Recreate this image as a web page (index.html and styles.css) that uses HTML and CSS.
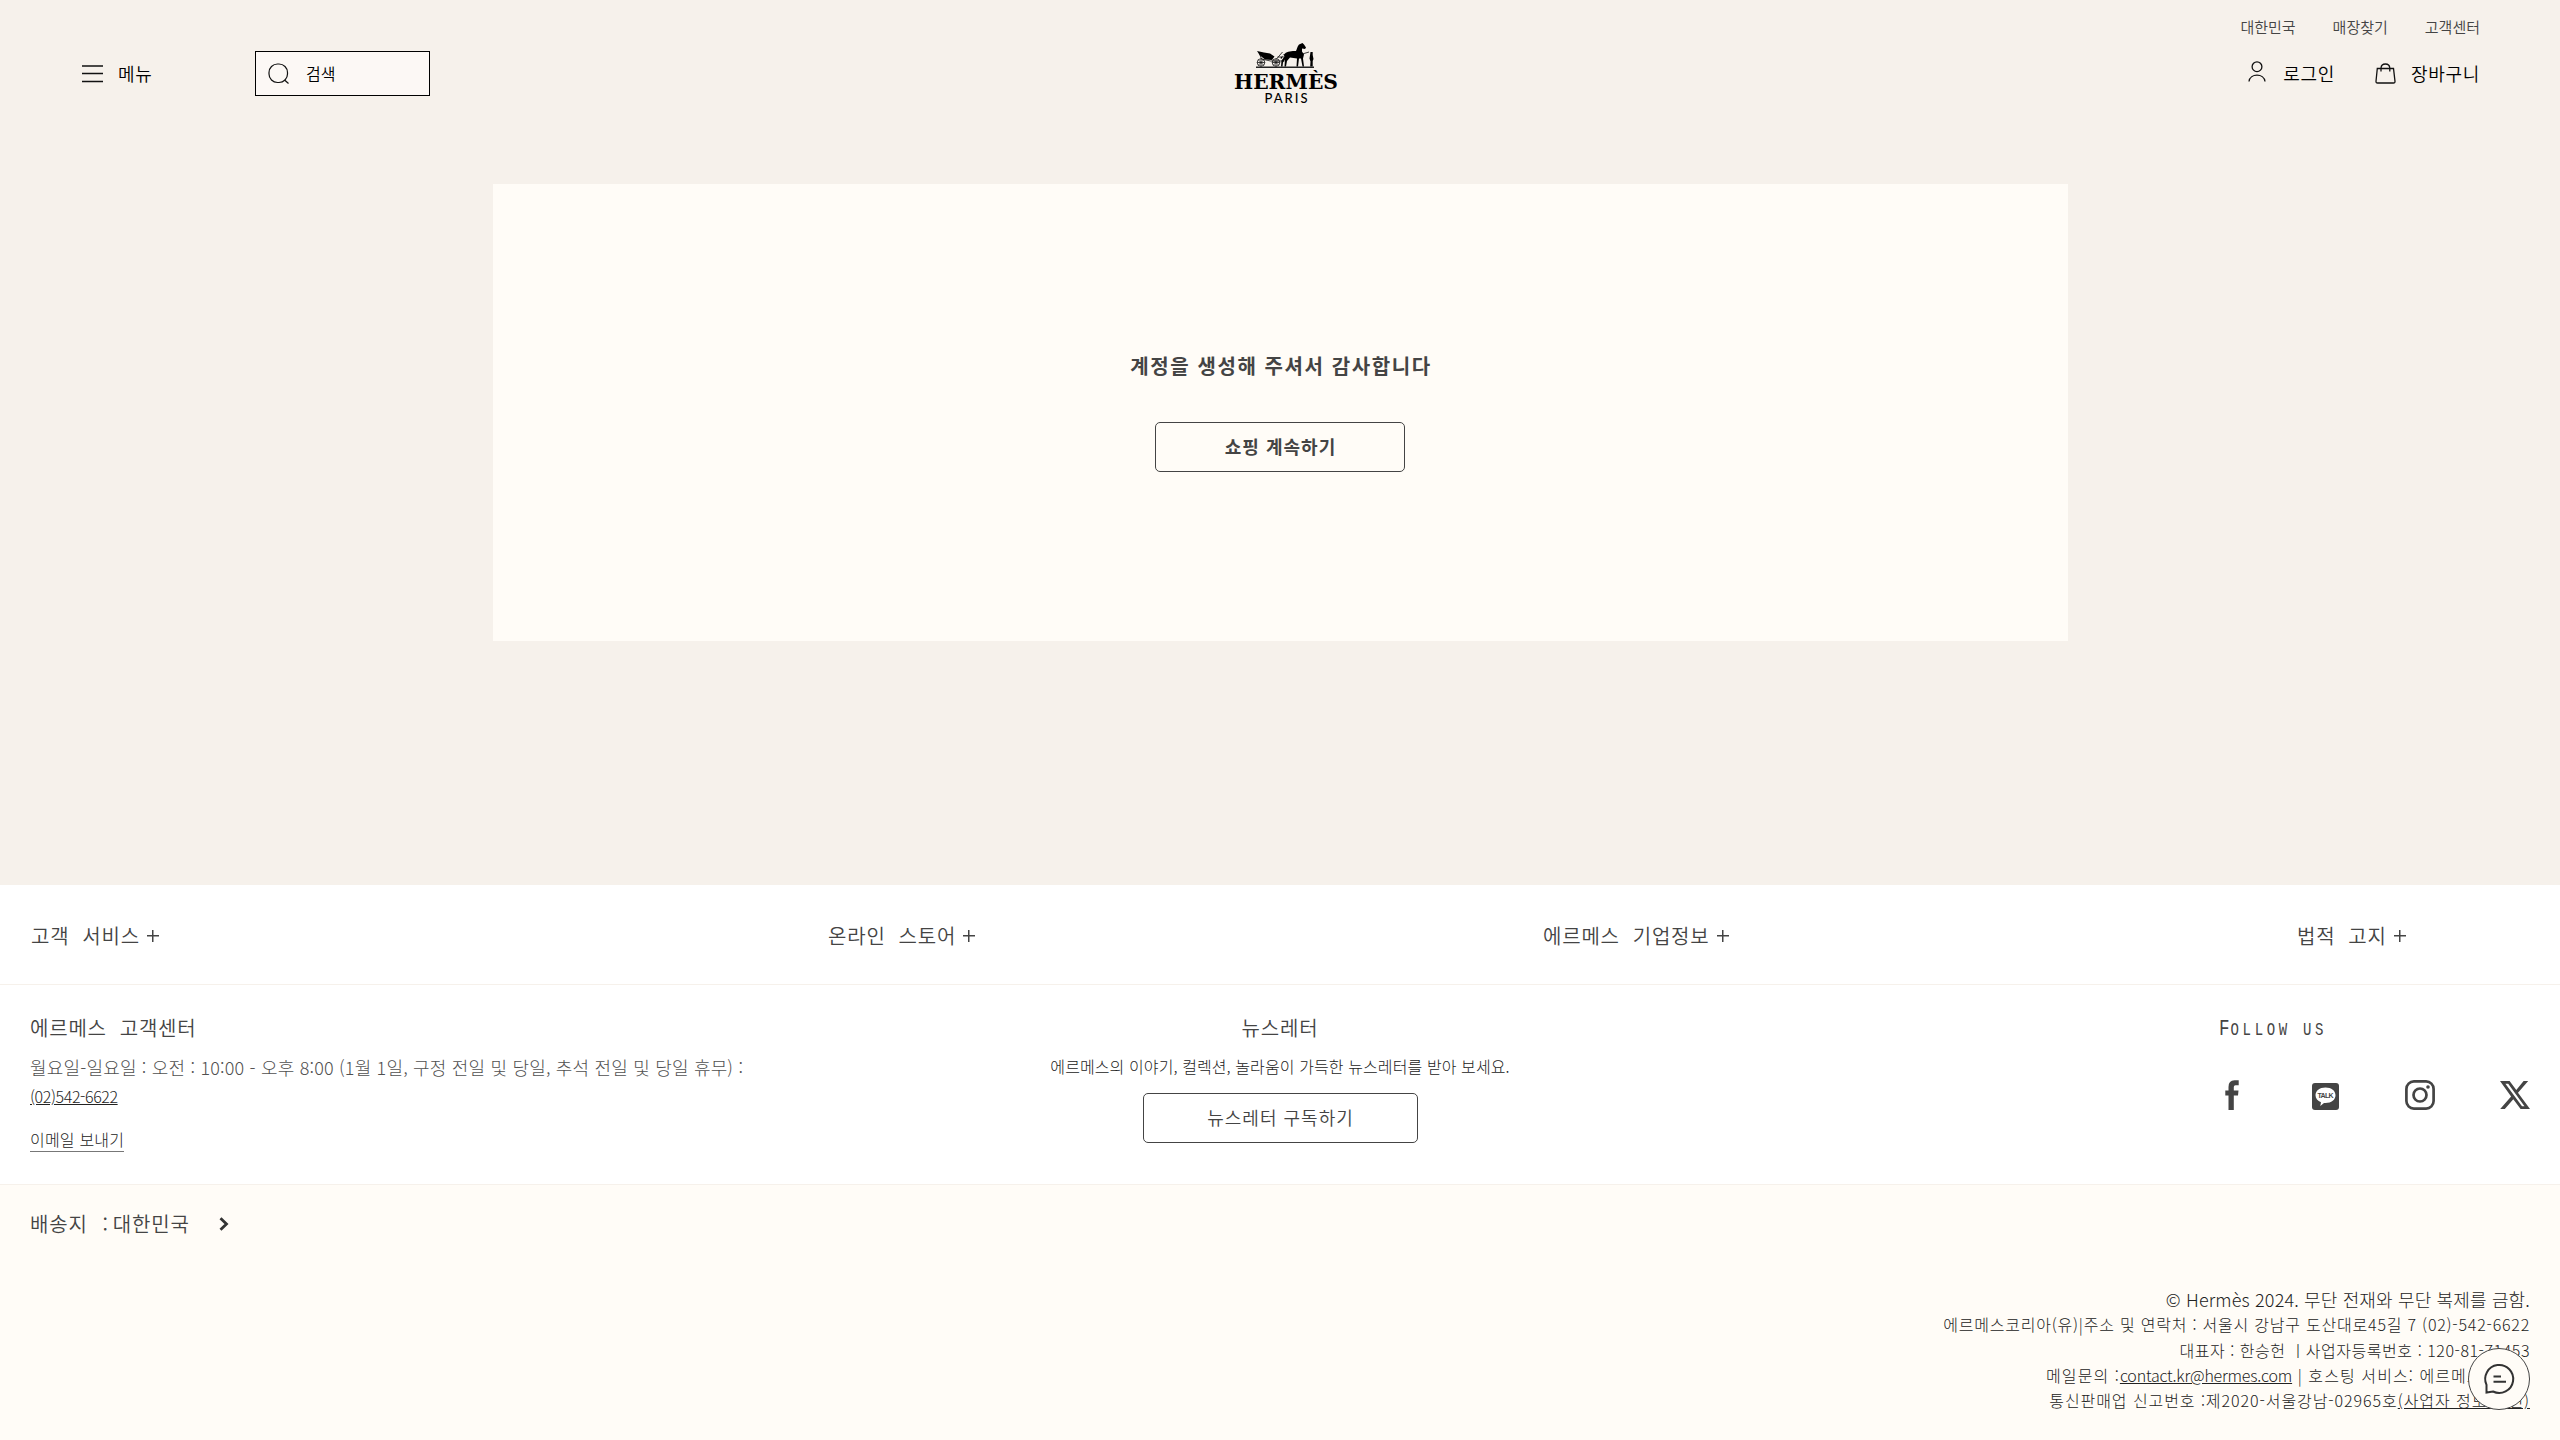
FILE: index.html
```html
<!DOCTYPE html>
<html lang="ko">
<head>
<meta charset="utf-8">
<title>Hermès</title>
<link rel="stylesheet" href="styles.css">
</head>
<body>
<header class="header">
  <div class="header-left">
    <button class="menu">
      <svg width="21" height="18" viewBox="0 0 21 18" fill="none" stroke="#111" stroke-width="1.3"><path d="M0 1h21M0 8.500h21M0 16.500h21"/></svg>
      <span>메뉴</span>
    </button>
    <div class="search">
      <svg width="22" height="22" viewBox="0 0 22 22" fill="none" stroke="#111" stroke-width="1.2"><rect x="1" y="1" width="18.500" height="18.500" rx="8.500"/><path d="M16.500 17l4 3.500"/></svg>
      <span>검색</span>
    </div>
  </div>
  <svg class="logo" width="106" height="62" viewBox="0 0 106 62" role="img">
    <path d="M23 24.300h58" stroke="#222" stroke-width="1.600"/>
    <g fill="none" stroke="#111" stroke-width=".8">
      <circle cx="28" cy="19.500" r="3.800"/><circle cx="43" cy="19.500" r="3.800"/>
      <path d="M28 15.700v7.600M24.200 19.500h7.600M25.500 17l5 5M25.500 22l5-5M43 15.700v7.600M39.200 19.500h7.600M40.500 17l5 5M40.500 22l5-5M28.500 16l9 2h14M26 9.500L28.500 16M43.500 16l6-7M44.500 14h8M66 12l10-3"/>
    </g>
    <path d="M24 8l7 1.500 6 1 4.500 3-2.500 3.500-7-.5-5-4z"/>
    <path d="M52 10.500c2-2 7-2.500 11-2.500 1-2 1-4 3-6.500l3.500-1.500 1.500 1.500 2 3-1 1.500-3-.5 0 3 2 3-1 4 1 8h-1.500l-1.500-8-2 0-1 8h-1.500l.5-8-7-1-3 3.500-1 5.500h-1.500l.5-7-2 3-.5 4h-1.500l.5-6 3-4-1-2.500-2 5-1.200-1z"/>
    <path d="M77.500 9h2.200v3l.8 4-.8 2v5.500h-2.500l.3-5-1-3z"/>
    <text class="logo-name" x="1" y="46" textLength="104" lengthAdjust="spacingAndGlyphs">HERMÈS</text>
    <text class="logo-city" x="31.500" y="60.300" textLength="43" lengthAdjust="spacing">PARIS</text>
  </svg>
  <div class="header-right">
    <nav class="top-links"><a>대한민국</a><a>매장찾기</a><a>고객센터</a></nav>
    <nav class="actions">
      <a class="action login">
        <svg width="18" height="21" viewBox="0 0 18 21" fill="none" stroke="#111" stroke-width="1.300"><circle cx="9" cy="5.700" r="4.900"/><path d="M1 20.500c1-8.500 15-8.500 16 0"/></svg>
        <span>로그인</span>
      </a>
      <a class="action">
        <svg width="21" height="21" viewBox="0 0 21 21" fill="none" stroke="#111" stroke-width="1.300"><path d="M2.300 5.500h16.200L20 18.300q.1 1.700-1.500 1.700H2.500Q.9 20 1 18.300zM6 8.500V5q.3-4 4.400-4t4.400 4v3.500"/></svg>
        <span>장바구니</span>
      </a>
    </nav>
  </div>
</header>

<main class="card">
  <h1 class="title">계정을 생성해 주셔서 감사합니다</h1>
  <a class="button shop">쇼핑 계속하기</a>
</main>

<footer>
  <nav class="foot-nav">
    <a class="heading">고객 서비스<i class="plus"></i></a>
    <a class="heading">온라인 스토어<i class="plus"></i></a>
    <a class="heading">에르메스 기업정보<i class="plus"></i></a>
    <a class="heading">법적 고지<i class="plus"></i></a>
  </nav>
  <section class="contact">
    <div class="service">
      <h2 class="heading">에르메스 고객센터</h2>
      <p class="hours">월요일-일요일 : 오전 : 10:00 - 오후 8:00 (1월 1일, 구정 전일 및 당일, 추석 전일 및 당일 휴무) :</p>
      <a class="phone">(02)542-6622</a>
      <a class="mail">이메일 보내기</a>
    </div>
    <div class="newsletter">
      <h2 class="heading">뉴스레터</h2>
      <p class="news-text">에르메스의 이야기, 컬렉션, 놀라움이 가득한 뉴스레터를 받아 보세요.</p>
      <a class="button subscribe">뉴스레터 구독하기</a>
    </div>
    <div class="social">
      <h2 class="follow">Follow us</h2>
      <div class="social-icons">
        <svg width="14" height="30" viewBox="0 0 14 30" fill="#444"><path d="M3.500 30V15.500H.3v-5h3.200V7Q3.500.3 9.500.3H13.700v4.900H10.500Q8.800 5.200 8.800 7v3.500h4.700l-.5 5H8.800V30z"/></svg>
        <svg class="talk-icon" width="27" height="27" viewBox="0 0 27 27"><rect width="27" height="27" rx="3" fill="#444"/><path d="M13.500 4.500c6 0 10 3.300 10 7.800s-4 7.700-10 7.700l-1.500-.1L8.300 23l.7-3.700c-3.300-1.200-5.500-3.700-5.500-7 0-4.500 4-7.800 10-7.800z" fill="#fff"/><text class="talk" x="5.500" y="15.300" textLength="16">TALK</text></svg>
        <svg class="insta-icon" width="30" height="30" viewBox="0 0 30 30" fill="none" stroke="#444" stroke-width="2.700"><rect x="1.400" y="1.400" width="27.200" height="27.200" rx="7.500"/><circle cx="15" cy="15" r="6.500"/><circle cx="23" cy="7" r="1.800" fill="#444" stroke="none"/></svg>
        <svg width="30" height="28" viewBox="0 0 30 28"><path d="M23.600 0h4.600L18 11.700 30 28h-9.400l-7.300-9.800L4.800 28H.2l10.900-12.500L0 0h9.600l6.700 8.900zM22 25.200h2.500L8.200 2.700H5.400z" fill="#444"/></svg>
      </div>
    </div>
  </section>
  <section class="legal">
    <a class="heading ship">배송지<span class="colon">:</span>대한민국<svg width="10" height="14" viewBox="0 0 10 14" fill="none" stroke="#333" stroke-width="2.800"><path d="M1.500 1.200L7.500 7l-6 5.800"/></svg></a>
    <div class="legal-text">
      <p class="copy">© Hermès 2024. 무단 전재와 무단 복제를 금함.</p>
      <p class="address">에르메스코리아(유)|주소 및 연락처 : 서울시 강남구 도산대로45길 7 (02)-542-6622</p>
      <p class="owner">대표자 : 한승헌 ㅣ사업자등록번호 : 120-81-71453</p>
      <p class="hosting">메일문의 :<u>contact.kr@hermes.com</u> | 호스팅 서비스: 에르메스코리아</p>
      <p class="permit">통신판매업 신고번호 :제2020-서울강남-02965호<u>(사업자 정보 확인)</u></p>
    </div>
  </section>
</footer>
<button class="chat"><svg width="32" height="32" viewBox="0 0 32 32" fill="none" stroke="#333" stroke-width="2"><path d="M3.500 29.500V21.800A14 14 0 1 1 10 28.500z"/><path d="M10.500 13.500h7.500M10.500 18.800h12.500"/></svg></button>
</body>
</html>
```
FILE: styles.css
```css
* { box-sizing: border-box; }
body { margin: 0; height: 1440px; overflow: hidden; background: #f6f1eb; color: #444; font: 350 16px/25px "Noto Sans CJK KR", sans-serif; }
h1, h2, p { margin: 0; font-weight: inherit; }
button { background: none; border: 0; padding: 0; font: inherit; color: inherit; }
svg { display: block; flex: none; overflow: visible; }

.header { display: grid; grid-template-columns: 1fr auto 1fr; align-items: start; height: 184px; padding: 0 80px 0 82px; color: #000; }
.header-left { display: flex; align-items: center; height: 45px; margin-top: 51px; }
.menu { display: flex; align-items: center; width: 173px; gap: 15px; font-size: 18px; letter-spacing: .7px; }
.search { display: flex; align-items: center; gap: 16px; width: 175px; height: 45px; padding-left: 12px; border: 1px solid #000; background: #fcf8f5; font-size: 16px; }
.logo { margin: 43px 0 0 10px; }
.logo-name { font: bold 21px "DejaVu Serif", serif; }
.logo-city { font: 500 13px Lato, sans-serif; }
.header-right { display: flex; flex-direction: column; align-items: flex-end; padding-top: 15px; }
.top-links { display: flex; gap: 37px; font-size: 15px; line-height: 24px; color: #444; }
.actions { display: flex; gap: 40px; margin-top: 22px; font-size: 18px; letter-spacing: .7px; }
.action { display: flex; align-items: center; gap: 15px; }
.login { gap: 17px; }
.login svg { margin-top: -4px; }

.card { display: flex; flex-direction: column; align-items: center; width: 1575px; height: 457px; margin: 0 auto; padding-top: 167px; background: #fffcf7; }
.title { padding-left: 2px; font-size: 20px; line-height: 30px; font-weight: 700; letter-spacing: 1.600px; }
.button { display: flex; align-items: center; justify-content: center; height: 50px; padding: 0 0 2px 1px; border: 1px solid #444; border-radius: 5px; font-size: 18px; letter-spacing: 1px; }
.shop { width: 250px; margin-top: 41px; font-weight: 600; }

footer { margin-top: 244px; }
.heading { font-size: 20px; line-height: 30px; letter-spacing: .8px; word-spacing: 6.500px; }
.foot-nav { display: grid; grid-template-columns: 797px 715px 754px 1fr; align-items: center; height: 99px; padding: 3px 0 0 31px; background: #fff; }
.foot-nav .heading { display: flex; align-items: center; gap: 7px; }
.plus { width: 12px; height: 12px; background: linear-gradient(#444, #444) center / 12px 1.500px no-repeat, linear-gradient(#444, #444) center / 1.500px 12px no-repeat; }
.contact { display: grid; grid-template-columns: 1fr 460px 1fr; height: 201px; padding: 28px 30px 0; border: solid #f6f1eb; border-width: 1px 0; background: #fff; }
.service { display: flex; flex-direction: column; align-items: flex-start; }
.hours { margin-top: 10px; font-size: 18px; line-height: 28px; font-weight: 300; letter-spacing: .18px; color: #505050; white-space: nowrap; }
.phone { margin-top: 2px; line-height: 26px; font-weight: 300; letter-spacing: -.4px; color: #222; text-decoration: underline; }
.mail { margin-top: 18px; line-height: 24px; font-weight: 300; letter-spacing: .2px; color: #222; border-bottom: 1px solid #777; }
.newsletter { display: flex; flex-direction: column; align-items: center; }
.news-text { margin-top: 10px; line-height: 26px; font-weight: 300; letter-spacing: .1px; color: #222; white-space: nowrap; }
.subscribe { width: 275px; margin-top: 14px; }
.social { width: 311px; justify-self: end; }
.follow { width: 160px; margin-top: 2px; font: 400 17.500px/30px "Liberation Mono", monospace; letter-spacing: 4.600px; text-transform: uppercase; white-space: nowrap; transform: scaleX(.8); transform-origin: left; }
.follow::first-letter { font-size: 22px; letter-spacing: 1.200px; }
.social-icons { display: flex; align-items: center; height: 30px; margin-top: 35px; padding-left: 6px; }
.talk-icon { margin: 2px 66px 0 73px; }
.insta-icon { margin-right: 65px; }
.talk { font: 700 7px "Liberation Sans", sans-serif; fill: #444; }
.legal { display: flex; justify-content: space-between; height: 255px; padding: 24px 30px 0; background: #fffcf7; }
.ship { display: flex; align-items: center; height: 30px; }
.colon { margin: 0 4px 0 15px; }
.ship svg { margin-left: 29px; }
.legal-text { padding-top: 78px; line-height: 25.300px; font-weight: 300; color: #222; text-align: right; white-space: nowrap; }
.copy { font-size: 18px; letter-spacing: .15px; }
.address { letter-spacing: .78px; }
.owner { letter-spacing: .54px; }
.hosting { letter-spacing: 1.080px; }
.hosting u { letter-spacing: -.2px; }
.permit { letter-spacing: .93px; }
.chat { position: fixed; right: 30px; bottom: 30px; display: flex; align-items: center; justify-content: center; width: 62px; height: 62px; border: 1px solid #444; border-radius: 50%; background: #fffcf7; }
```
